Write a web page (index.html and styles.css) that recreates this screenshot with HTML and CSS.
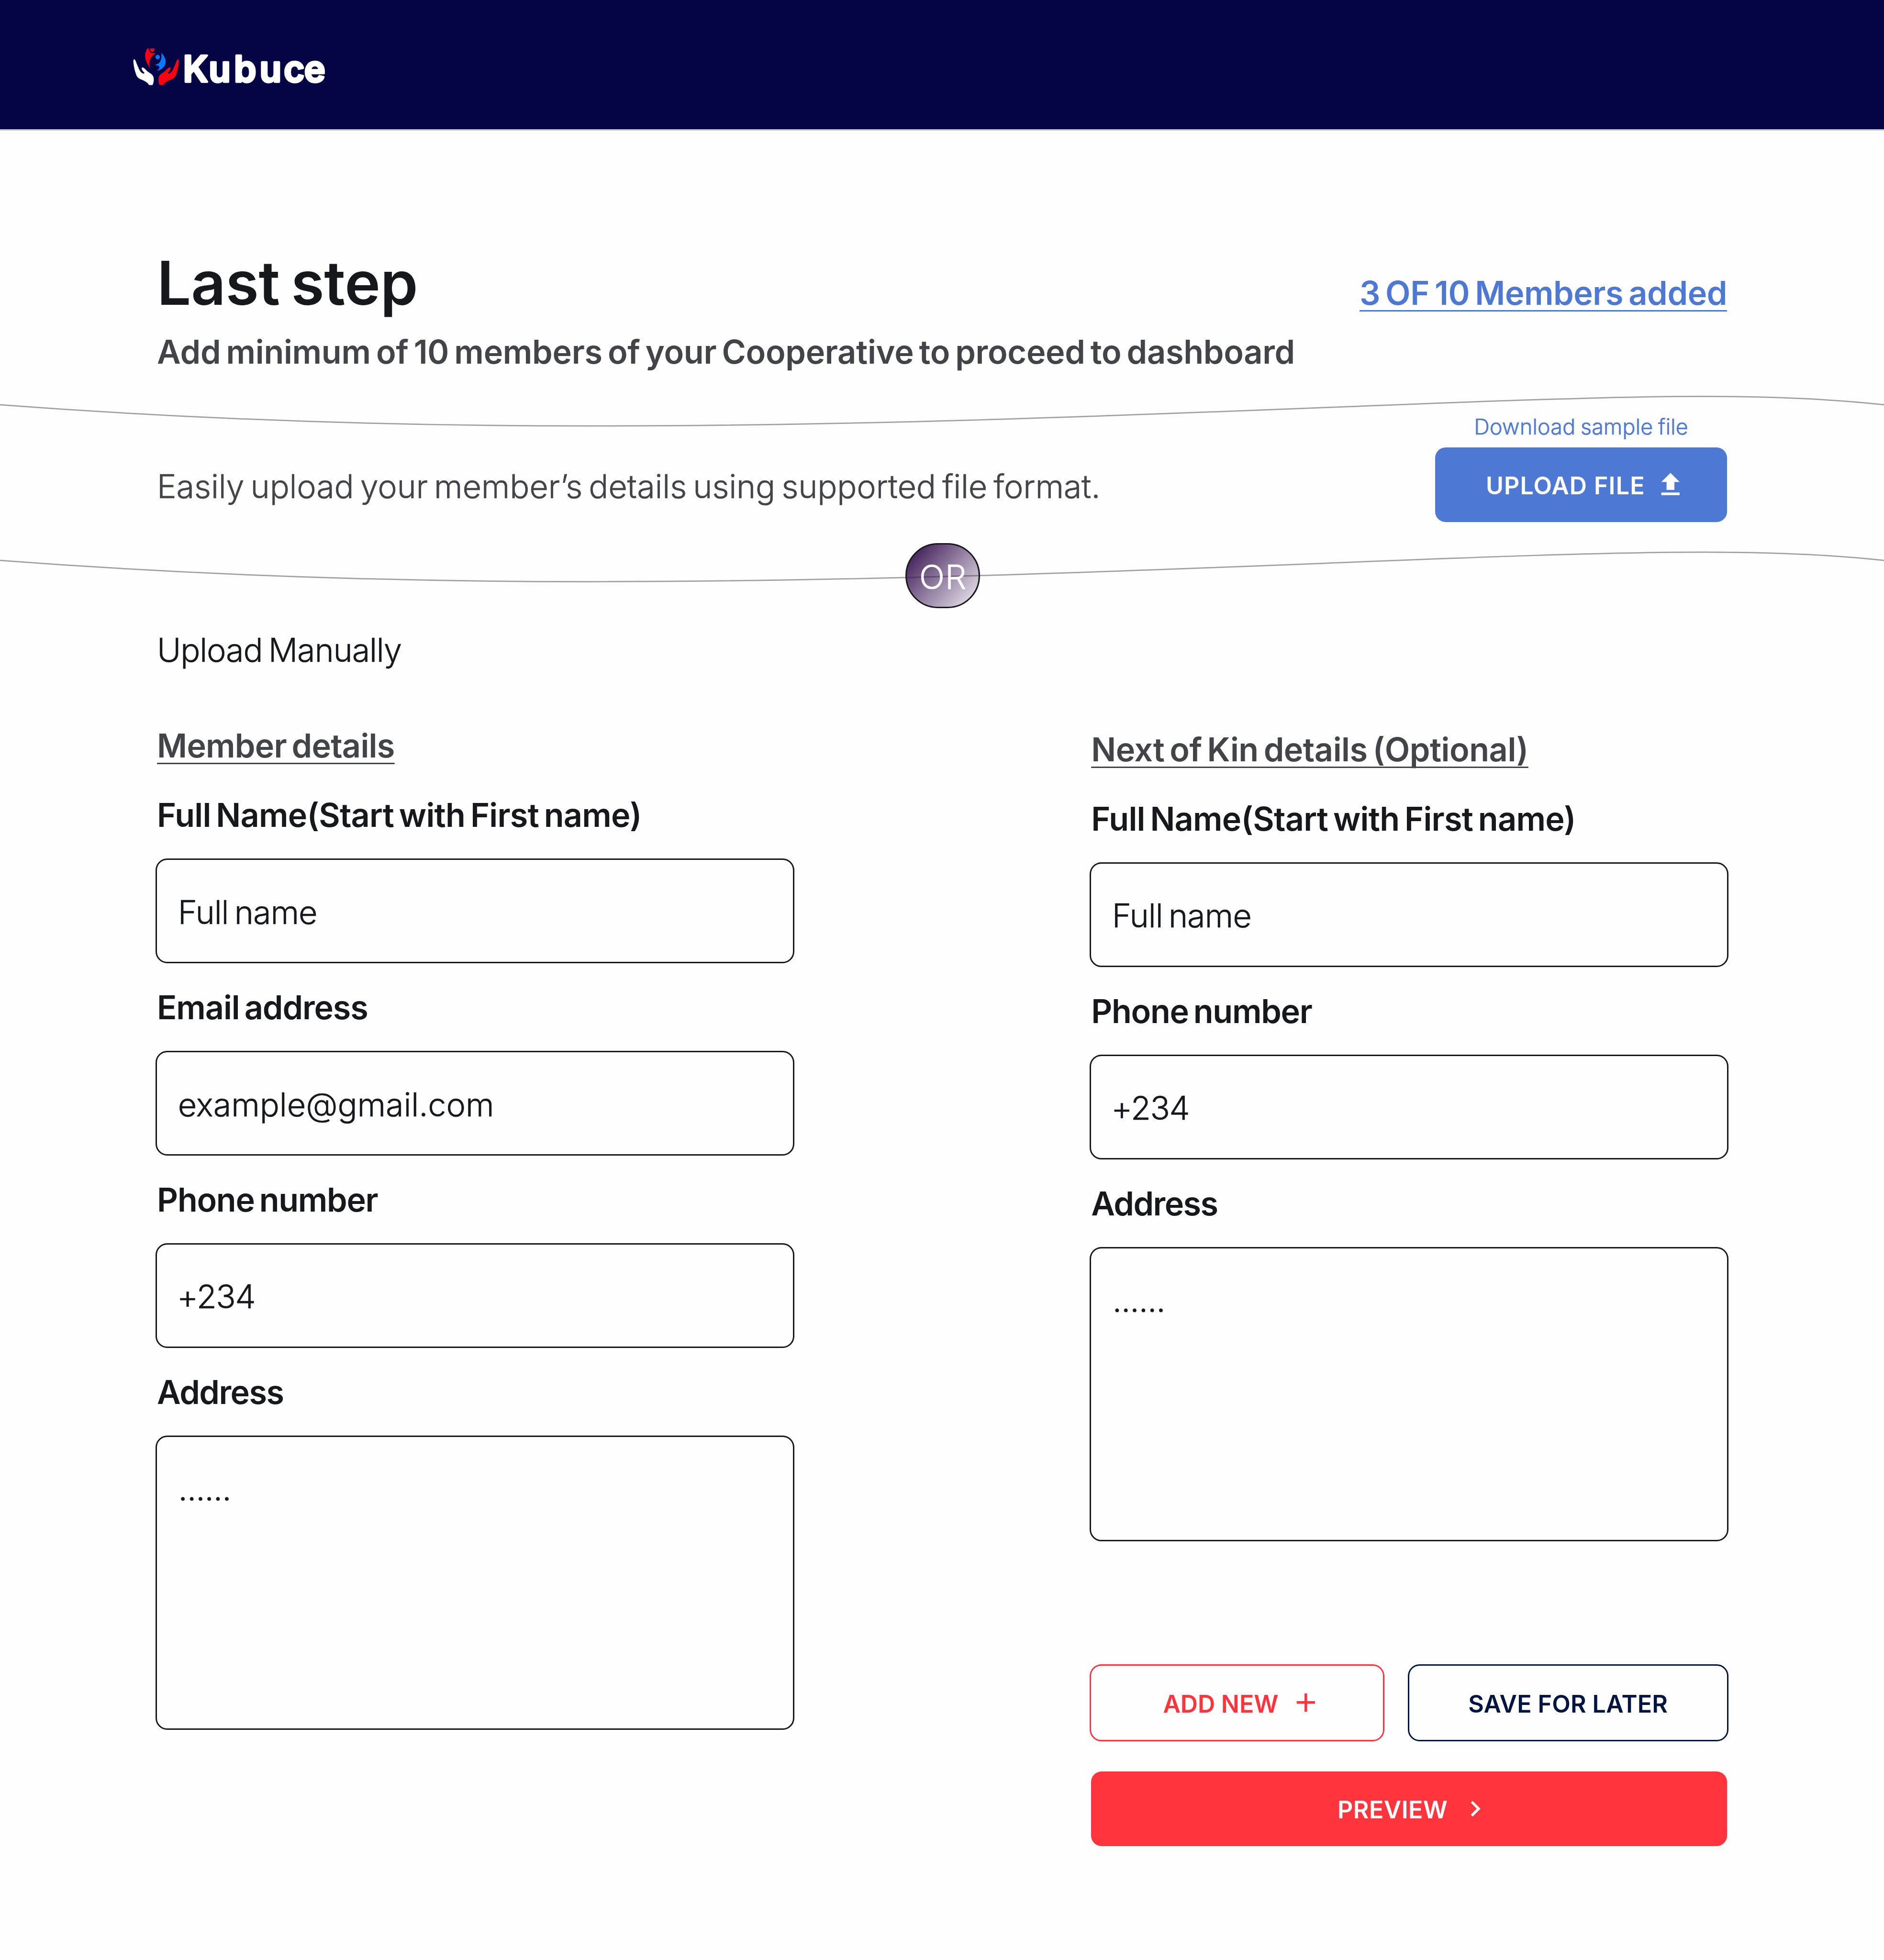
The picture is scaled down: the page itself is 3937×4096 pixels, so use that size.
FILE: index.html
```html
<!DOCTYPE html>
<html lang="en">
<head>
<meta charset="utf-8">
<title>Kubuce - Add members</title>
<link rel="stylesheet" href="styles.css">
</head>
<body>
<header class="header">
  <svg class="logo" viewBox="0 0 1500 651" role="img" aria-label="Kubuce">
    <defs>
      <path id="hand" d="M84 168C78 168 77 178 79 195C82 225 90 255 99 278C108 298 125 303 145 312C165 322 182 332 184 345L210 345C216 330 220 315 218 300C217 278 200 268 185 258C170 248 160 232 147 226C138 219 132 226 136 236C140 246 150 256 155 262C152 268 140 266 132 258C120 245 108 215 98 190C93 178 90 168 84 168Z"/>
    </defs>
    <use href="#hand" fill="#fff"/>
    <use href="#hand" fill="#fe0010" transform="translate(469 0) scale(-1 1)"/>
    <path fill="#fe0010" d="M175 93C160 112 157 140 160 160C165 185 178 205 192 228C190 215 186 200 189 185C193 158 212 136 232 127C220 124 212 127 203 124C190 119 184 108 185 93Z"/>
    <path fill="#fe0010" d="M194 93H223C225 107 218 117 208 117C198 117 191 107 194 93Z"/>
    <circle fill="#067bff" cx="245" cy="152" r="15"/>
    <path fill="#067bff" d="M270 123C285 138 300 160 300 183C299 215 275 240 240 248C250 238 260 228 256 218C250 208 235 210 224 206C240 203 256 196 264 180C272 163 273 140 270 123Z"/>
    <text class="logo-text" transform="scale(1.04 1.05)" x="404 574 741 910 1070 1205" y="308">Kubuce</text>
  </svg>
</header>

<main>
  <section class="intro">
    <div>
      <h1 class="title">Last step</h1>
      <p class="subtitle">Add minimum of 10 members of your Cooperative to proceed to dashboard</p>
    </div>
    <a class="progress">3 OF 10 Members added</a>
  </section>

  <section class="upload">
    <svg class="waves" viewBox="0 854.7 4320 540.3" aria-hidden="true">
      <path d="M0 928C450 962 900 976.7 1347 976.7C2418 976.7 3363 909 3909 909C4060 909 4200 915 4320 928"/>
      <path d="M0 1285C450 1319 900 1333.7 1347 1333.7C2418 1333.7 3363 1266 3909 1266C4060 1266 4200 1272 4320 1285"/>
    </svg>
    <p class="upload-text">Easily upload your member’s details using supported file format.</p>
    <div class="upload-action">
      <a class="sample">Download sample file</a>
      <div class="btn btn-upload"><span>UPLOAD FILE</span><svg class="icon" viewBox="0 0 24 24"><path d="M5 20h14v-2H5v2zM5 10h4v6h6v-6h4l-7-7-7 7z"/></svg></div>
    </div>
    <div class="or">OR</div>
  </section>

  <h2 class="manual">Upload Manually</h2>

  <section class="forms">
    <div class="form">
      <h3 class="form-title">Member details</h3>
      <div class="label label-name">Full Name(Start with First name)</div>
      <div class="field">Full name</div>
      <div class="label label-email">Email address</div>
      <div class="field field-email">example@gmail.com</div>
      <div class="label label-phone">Phone number</div>
      <div class="field field-phone">+234</div>
      <div class="label">Address</div>
      <div class="field field-area">......</div>
    </div>
    <div class="form form-kin">
      <h3 class="form-title form-title-kin">Next of Kin details (Optional)</h3>
      <div class="label label-name">Full Name(Start with First name)</div>
      <div class="field">Full name</div>
      <div class="label label-phone">Phone number</div>
      <div class="field field-phone">+234</div>
      <div class="label">Address</div>
      <div class="field field-area">......</div>
      <div class="actions">
        <div class="btn btn-add"><span>ADD NEW</span><svg class="icon" viewBox="0 0 24 24"><path d="M19 13h-6v6h-2v-6H5v-2h6V5h2v6h6v2z"/></svg></div>
        <div class="btn btn-save"><span>SAVE FOR LATER</span></div>
      </div>
      <div class="btn btn-preview"><span>PREVIEW</span><svg class="icon" viewBox="0 0 24 24"><path d="M10 6L8.59 7.41 13.17 12l-4.58 4.59L10 18l6-6z"/></svg></div>
    </div>
  </section>
</main>
</body>
</html>
```

FILE: styles.css
```css
html {
  font-size: 91.1343px;
}

* {
  box-sizing: border-box;
}

body {
  margin: 0;
  font-family: Inter, "Open Sans", sans-serif;
  font-size: 0.75rem;
  font-weight: 300;
  line-height: 0.96rem;
  word-spacing: -0.085em;
  color: #16181c;
  background: #fefefe;
  font-kerning: normal;
}

h1, h2, h3, p {
  margin: 0;
  font-weight: inherit;
  font-size: inherit;
}

.header {
  display: flex;
  height: 3rem;
  padding: 0.8rem 0 0 2.8rem;
  background: #050444;
  border-bottom: 3px solid #c9c9ca;
}

.logo {
  width: 5rem;
  height: 2.17rem;
}

.logo-text {
  font-size: 236px;
  font-weight: 600;
  fill: #fff;
  stroke: #fff;
  stroke-width: 14px;
  stroke-linejoin: round;
}

.intro {
  display: flex;
  justify-content: space-between;
  align-items: flex-start;
  padding: 2.586rem 3.6rem 0;
  white-space: nowrap;
}

.title {
  font-size: 1.385rem;
  font-weight: 600;
  line-height: 1.8rem;
  letter-spacing: -0.002em;
  word-spacing: -0.065em;
}

.subtitle {
  margin-top: 0.211rem;
  font-weight: 600;
  letter-spacing: -0.0037em;
  color: #434447;
}

.progress {
  margin-top: 0.655rem;
  font-weight: 600;
  letter-spacing: -0.0057em;
  color: #4d79d5;
  text-decoration: underline;
  text-decoration-thickness: 0.035rem;
  text-decoration-skip-ink: none;
  text-underline-offset: 0.12rem;
}

.upload {
  position: relative;
  display: flex;
  justify-content: space-between;
  align-items: flex-start;
  height: 5.403rem;
  margin-top: -0.01rem;
  padding: 0 3.6rem;
}

.waves {
  position: absolute;
  top: 0;
  left: 0;
  width: 100%;
  height: 100%;
  fill: none;
  stroke: #a0a0a0;
  stroke-width: 3;
}

/* Thickens the light weight a little */
.upload-text,
.sample,
.manual,
.field,
.or {
  -webkit-text-stroke: 0.6px currentColor;
}

.upload-text {
  margin-top: 2.127rem;
  letter-spacing: -0.0032em;
  color: #434447;
}

.upload-action {
  display: flex;
  flex-direction: column;
  align-items: center;
  gap: 0.17rem;
  margin-top: 0.943rem;
}

.sample {
  font-size: 0.495rem;
  line-height: 0.6rem;
  letter-spacing: 0.0015em;
  word-spacing: -0.05em;
  color: #4d79d5;
}

.btn {
  display: flex;
  align-items: center;
  height: 1.71rem;
  border-radius: 0.24rem;
  font-size: 0.55rem;
  font-weight: 600;
  word-spacing: 0;
  white-space: nowrap;
}

.btn span {
  padding-top: 0.045rem;
}

.icon {
  width: 0.72rem;
  height: 0.72rem;
  margin-left: 0.27rem;
  fill: currentColor;
}

.btn-upload {
  width: 6.69rem;
  padding-left: 1.16rem;
  letter-spacing: 0.0232em;
  color: #fff;
  background: #4d79d5;
}

.btn-upload .icon {
  margin-left: 0.22rem;
}

.or {
  position: absolute;
  top: 3.903rem;
  left: 20.76rem;
  display: flex;
  align-items: center;
  justify-content: center;
  width: 1.71rem;
  height: 1.5rem;
  padding: 0.06rem 0 0 0.02rem;
  border: 3px solid #16181c;
  border-radius: 0.75rem;
  font-size: 0.77rem;
  letter-spacing: 0.015em;
  color: #fff;
  background: linear-gradient(131deg, rgba(56, 20, 82, 0.94) 10%, rgba(84, 46, 108, 0.12) 95%);
}

.manual {
  margin: 0.475rem 3.6rem 0;
  letter-spacing: -0.0168em;
}

.forms {
  display: flex;
  justify-content: space-between;
  align-items: flex-start;
  padding: 1.242rem 3.6rem 0;
}

.form {
  width: 14.58rem;
}

.form-kin {
  margin-top: 0.085rem;
}

.form-title {
  width: max-content;
  margin-bottom: 0.63rem;
  font-weight: 600;
  letter-spacing: -0.0107em;
  color: #434447;
  text-decoration: underline;
  text-decoration-thickness: 0.033rem;
  text-decoration-skip-ink: none;
  text-underline-offset: 0.12rem;
}

.form-title-kin {
  letter-spacing: -0.0065em;
}

.label {
  margin-bottom: 0.513rem;
  font-weight: 600;
  letter-spacing: -0.0225em;
}

.label-name {
  letter-spacing: -0.0108em;
}

.label-email {
  letter-spacing: -0.0163em;
}

.label-phone {
  letter-spacing: -0.0185em;
}

.field {
  height: 2.4rem;
  margin: 0 -0.03rem 0.537rem;
  padding: 0.717rem 0.475rem 0;
  border: 3px solid #16181c;
  border-radius: 0.27rem;
  letter-spacing: -0.0155em;
}

.field-email {
  letter-spacing: -0.0015em;
}

.field-phone {
  padding-left: 0.455rem;
  letter-spacing: -0.02em;
}

.field-area {
  height: 6.75rem;
  margin-bottom: 0;
  padding-left: 0.485rem;
  letter-spacing: -0.014em;
}

.actions {
  display: flex;
  justify-content: space-between;
  margin: 2.815rem -0.03rem 0.69rem;
}

.actions .btn {
  height: 1.77rem;
  border: 3px solid;
  border-radius: 0.27rem;
}

.btn-add {
  width: 6.75rem;
  padding-left: 1.645rem;
  color: #ff343c;
}

.btn-save {
  justify-content: center;
  width: 7.35rem;
  letter-spacing: 0.004em;
  color: #02153f;
}

.btn-preview {
  padding-left: 5.65rem;
  letter-spacing: 0.0091em;
  color: #fff;
  background: #ff343c;
}
```
